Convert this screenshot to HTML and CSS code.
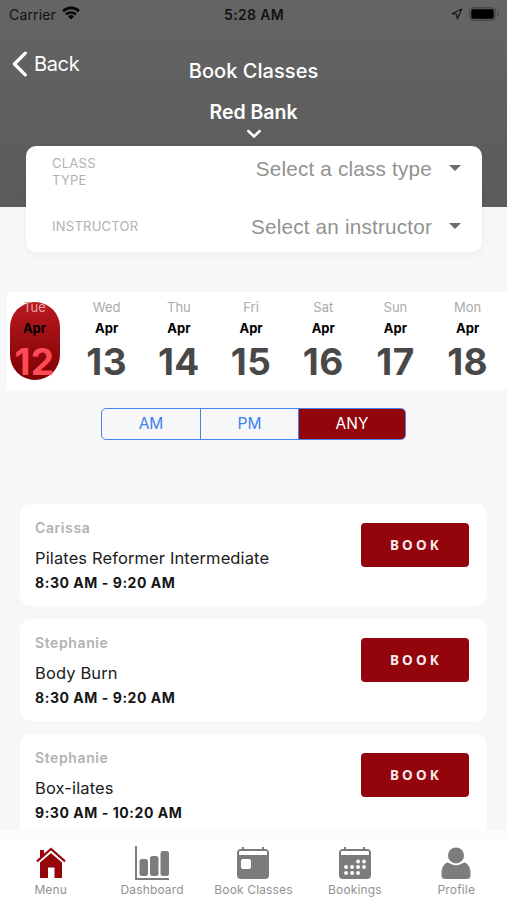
FILE: index.html
```html
<!DOCTYPE html>
<html lang="en">
<head>
<meta charset="utf-8">
<title>Book Classes</title>
<link rel="stylesheet" href="styles.css">
</head>
<body>
<div class="app">
  <header class="header">
    <div class="status">
      <div class="carrier"><span>Carrier</span>
        <svg width="18" height="14" viewBox="0 0 18 14"><g fill="none" stroke="#080808" stroke-width="2.6"><path d="M1 5.2a11.4 11.4 0 0 1 16 0"/><path d="M4 8.5a7.1 7.1 0 0 1 10 0"/></g><path d="M9 13.4 6.1 10.5a4.1 4.1 0 0 1 5.8 0z" fill="#080808"/></svg>
      </div>
      <div class="clock">5:28 AM</div>
      <div class="indicators">
        <svg width="12" height="12" viewBox="0 0 12 12"><path d="M10.8 1 1 5.7l4.6.7.7 4.5z" fill="none" stroke="#181818" stroke-width="1.2" stroke-linejoin="round"/></svg>
        <svg width="30" height="14" viewBox="0 0 30 14"><rect x=".5" y=".5" width="26" height="13" rx="4" fill="#555" stroke="#4b4b4b"/><rect x="2.3" y="2.3" width="22.4" height="9.4" rx="2.2" fill="#000"/><path d="M28 4.7q1.6.7 1.6 2.3T28 9.3z" fill="#444"/></svg>
      </div>
    </div>
    <div class="nav">
      <a class="back"><svg width="16" height="26" viewBox="0 0 16 26"><path d="M13.3 2.2 2.4 13l10.9 10.8" fill="none" stroke="#fff" stroke-width="3.3" stroke-linecap="round" stroke-linejoin="round"/></svg><span>Back</span></a>
      <h1>Book Classes</h1>
    </div>
    <div class="location">Red Bank</div>
    <svg class="chevron" width="16" height="10" viewBox="0 0 16 10"><path d="m2.3 2 5.7 5.5L13.700 2" fill="none" stroke="#fff" stroke-width="2.500" stroke-linecap="round"/></svg>
  </header>

  <section class="filters">
    <div class="filter"><label>CLASS<br>TYPE</label><span class="value">Select a class type</span><i class="caret"></i></div>
    <div class="filter"><label>INSTRUCTOR</label><span class="value">Select an instructor</span><i class="caret"></i></div>
  </section>

  <section class="days">
    <div class="day selected"><span>Tue</span><b>Apr</b><strong>12</strong></div>
    <div class="day"><span>Wed</span><b>Apr</b><strong>13</strong></div>
    <div class="day"><span>Thu</span><b>Apr</b><strong>14</strong></div>
    <div class="day"><span>Fri</span><b>Apr</b><strong>15</strong></div>
    <div class="day"><span>Sat</span><b>Apr</b><strong>16</strong></div>
    <div class="day"><span>Sun</span><b>Apr</b><strong>17</strong></div>
    <div class="day"><span>Mon</span><b>Apr</b><strong>18</strong></div>
  </section>

  <div class="segments"><div>AM</div><div>PM</div><div class="active">ANY</div></div>

  <main class="classes">
    <article class="card"><div><p class="teacher">Carissa</p><p class="title">Pilates Reformer Intermediate</p><p class="time">8:30 AM - 9:20 AM</p></div><button>BOOK</button></article>
    <article class="card"><div><p class="teacher">Stephanie</p><p class="title">Body Burn</p><p class="time">8:30 AM - 9:20 AM</p></div><button>BOOK</button></article>
    <article class="card"><div><p class="teacher">Stephanie</p><p class="title">Box-ilates</p><p class="time">9:30 AM - 10:20 AM</p></div><button>BOOK</button></article>
  </main>

  <nav class="tabs">
    <a class="tab"><svg width="36" height="36" viewBox="0 0 36 36"><path d="M7 4h4v4l-4 4zM7 16.500 18 7l11 9.500V32h-7.500V21.500h-6.500V32H7z" fill="#96050c"/><path d="M4 15.300 18 3l14 12.300" fill="none" stroke="#96050c" stroke-width="2.200"/><path d="m5 17.200 13-11.300 13 11.300" fill="none" stroke="#fff" stroke-width="1.100"/></svg><span>Menu</span></a>
    <a class="tab"><svg width="36" height="36" viewBox="0 0 36 36"><path d="M2 0v33h33" fill="none" stroke="#7c7c7c" stroke-width="2"/><g fill="#7c7c7c"><rect x="5.500" y="13" width="8.500" height="17" rx="2.500"/><rect x="16" y="10" width="8.500" height="20" rx="2.500"/><rect x="26.500" y="5" width="8.500" height="25" rx="2.500"/></g></svg><span>Dashboard</span></a>
    <a class="tab"><svg width="36" height="36" viewBox="0 0 36 36"><path d="M8 1v5M28 1v5" stroke="#7c7c7c" stroke-width="2"/><rect x="2" y="3" width="32" height="30" rx="4" fill="#7c7c7c"/><path d="M5 5h26q1 0 1 1v3H4V6q0-1 1-1z" fill="#fff"/><rect x="6" y="13" width="10" height="10" rx="2" fill="#fff"/></svg><span>Book Classes</span></a>
    <a class="tab"><svg width="36" height="36" viewBox="0 0 36 36"><path d="M8 1v5M27 1v5" stroke="#7c7c7c" stroke-width="2"/><rect x="2" y="3" width="32" height="30" rx="4" fill="#7c7c7c"/><path d="M5 5h26q1 0 1 1v3H4V6q0-1 1-1z" fill="#fff"/><path d="M21 15.500h.1m5.900 0h.1M9 21h.1m5.900 0h.1m5.900 0h.1m5.900 0h.1M9 27h.1m5.900 0h.1m5.900 0h.1" stroke="#fff" stroke-width="3.800" stroke-linecap="round"/></svg><span>Bookings</span></a>
    <a class="tab"><svg width="36" height="36" viewBox="0 0 36 36"><path d="M9 16.500q2 0 4 1.500 5 2.500 10 0 2-1.500 4-1.500 5.500 3 5.500 11v2q0 3.500-4 3.500h-21q-4 0-4-3.500v-2q0-8 5.500-11z" fill="#7c7c7c"/><circle cx="18" cy="9.400" r="8.600" fill="#7c7c7c" stroke="#fff" stroke-width="1.200"/></svg><span>Profile</span></a>
  </nav>
</div>
</body>
</html>
```
FILE: styles.css
```css
* { box-sizing: border-box; }
body { margin: 0; font-family: Inter, "Liberation Sans", sans-serif; }
h1, p { margin: 0; }
svg { display: block; flex: none; }

.app {
  display: flex;
  flex-direction: column;
  width: 507px;
  height: 900px;
  overflow: hidden;
  background: #f5f7f9;
}

.header {
  flex: none;
  height: 207px;
  background: linear-gradient(#656565, #606060 40%, #5b5b5b);
  color: #fff;
}
.status {
  display: grid;
  grid-template-columns: 1fr auto 1fr;
  align-items: center;
  height: 28px;
  padding: 0 8px 0 9px;
  color: #111;
  font-size: 14px;
}
.carrier { display: flex; align-items: center; gap: 6px; letter-spacing: .15px; }
.carrier svg { margin-top: -2px; }
.clock { font-weight: 600; letter-spacing: .35px; }
.indicators { display: flex; justify-content: flex-end; align-items: center; gap: 6px; }
.nav {
  display: grid;
  grid-template-columns: 1fr auto 1fr;
  height: 70px;
  align-items: start;
}
.back {
  display: flex;
  align-items: center;
  gap: 6px;
  padding: 23px 0 0 12px;
  font-size: 20px;
  letter-spacing: -.35px;
}
h1 { padding-top: 30px; font-size: 20px; line-height: 26px; font-weight: 500; letter-spacing: .05px; }
.location { padding-top: 1px; line-height: 26px; text-align: center; font-size: 19.500px; font-weight: 600; }
.chevron { margin: 4px auto 0; }

.filters {
  flex: none;
  position: relative;
  width: 456px;
  height: 106px;
  margin: -61px 0 0 26px;
  padding: 9px 21px 0 26px;
  border-radius: 10px;
  background: #fff;
  box-shadow: 0 4px 9px #00000009;
}
.filter { display: flex; align-items: flex-start; height: 58px; }
.filter label { width: 110px; font-size: 13px; line-height: 17px; letter-spacing: .25px; color: #b1b1b1; }
.filter:last-child label { padding-top: 5px; }
.value { flex: 1; text-align: right; font: 20.700px/28px "Liberation Sans", Arial, sans-serif; color: #929292; letter-spacing: .2px; white-space: nowrap; }
.caret { margin: 10px 0 0 17px; border: 6px solid transparent; border-top-color: #6c6c6c; border-bottom: 0; }

.days {
  flex: none;
  display: grid;
  grid-template-columns: repeat(7, 50px);
  gap: 22.200px;
  height: 98px;
  margin: 40px 0 0 7px;
  padding: 10px 0 9px 2.500px;
  background: #fff;
}
.day { display: flex; flex-direction: column; align-items: center; height: 78px; border-radius: 25px; }
.day span { font-size: 13px; line-height: 11px; color: #aaa; }
.day b { margin-top: 6px; font-size: 13px; line-height: 18px; font-weight: 650; color: #000; }
.day strong { margin-top: 3px; font-size: 37px; line-height: 43px; font-weight: 650; color: #484848; letter-spacing: .4px; }
.day.selected { background: linear-gradient(#b91a20, #7c0004); }
.day.selected span { color: #e6a2a4; }
.day.selected strong { color: #ff4b55; }

.segments {
  flex: none;
  display: grid;
  grid-template-columns: 98px 98px 1fr;
  width: 305px;
  height: 32px;
  margin: 18px 0 0 101px;
  overflow: hidden;
  border: 1px solid #4486ee;
  border-radius: 5px;
  color: #3d82f1;
  font-size: 15.500px;
  line-height: 30px;
  text-align: center;
}
.segments div + div { border-left: 1px solid #4486ee; }
.segments .active { background: #94040c; color: #fff; }

.classes {
  flex: 1;
  min-height: 0;
  display: flex;
  flex-direction: column;
  gap: 13px;
  padding: 64px 20px 0;
  overflow: hidden;
}
.card {
  flex: none;
  display: flex;
  justify-content: space-between;
  height: 102px;
  padding: 15px 18px 0 15px;
  border-radius: 11px;
  background: #fff;
}
.teacher { font-size: 14px; line-height: 18px; font-weight: 600; letter-spacing: .6px; color: #b2b2b2; }
.title { margin-top: 9px; font-size: 16.500px; line-height: 24px; letter-spacing: .12px; color: #202020; white-space: nowrap; }
.time { margin-top: 3px; font-size: 14px; line-height: 20px; font-weight: 650; letter-spacing: .55px; color: #151515; }
button {
  width: 108px;
  height: 44px;
  margin-top: 4px;
  padding: 0 0 0 2px;
  border: 0;
  border-radius: 4px;
  background: #94040c;
  color: #f8eaea;
  font: 700 13.500px/44px "Noto Sans", sans-serif;
  letter-spacing: 3.200px;
}

.tabs {
  flex: none;
  display: grid;
  grid-template-columns: repeat(5, 1fr);
  height: 70px;
  border-top: 9px solid #fcfcfd;
  background: #fff;
  color: #929292;
}
.tab { display: flex; flex-direction: column; align-items: center; padding-top: 7px; }
.tab span { font-size: 12px; line-height: 16px; letter-spacing: .15px; white-space: nowrap; }
```
